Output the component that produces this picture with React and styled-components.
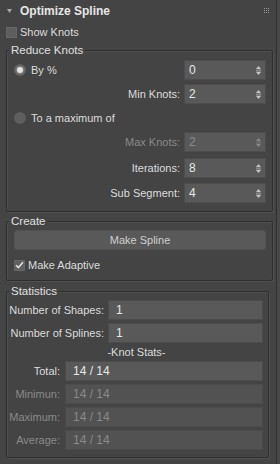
import React from "react";
import styled, { createGlobalStyle } from "styled-components";

const GlobalStyle = createGlobalStyle`
  html, body { margin: 0; padding: 0; background: #484848; }
  body { font-family: "Liberation Sans", Arial, sans-serif; font-size: 11px; color: #dcdcdc; }
  * { box-sizing: border-box; }
`;

const Panel = styled.div`
  width: 277px;
  min-height: 464px;
  background: #444444;
  border-right: 1px solid #2f2f2f;
  display: flex;
  flex-direction: column;
  white-space: nowrap;
`;

const Header = styled.div`
  height: 22px;
  display: flex;
  align-items: center;
  padding: 0 6px 0 7px;
`;

const Title = styled.span`
  margin-left: 8px;
  font-weight: bold;
  font-size: 12px;
  color: #e6e6e6;
  flex: 1;
`;

const CheckRow = styled.label`
  height: 20px;
  display: flex;
  align-items: center;
  gap: 3px;
  padding-left: ${(p) => p.$indent || 0}px;
  margin-top: ${(p) => p.$top || 0}px;
`;

const Box = styled.span`
  width: 11px;
  height: 11px;
  background: #5e5e5e;
  border: 1px solid #666;
  display: flex;
  align-items: center;
  justify-content: center;
`;

const Group = styled.div`
  position: relative;
  margin: ${(p) => p.$top}px ${(p) => p.$right}px 0 6px;
  border: 1px solid #2e2e2e;
  box-shadow: inset 1px 1px 0 #4e4e4e, 1px 1px 0 #505050;
  border-radius: 2px;
  padding: ${(p) => p.$pt}px ${(p) => p.$pr}px ${(p) => p.$pb}px 7px;
  display: flex;
  flex-direction: column;
  gap: ${(p) => p.$gap || 0}px;
`;

const GroupLabel = styled.span`
  position: absolute;
  top: -8px;
  left: 2px;
  padding: 0 2px;
  background: #444444;
  line-height: 15px;
  font-size: 11.5px;
  color: #e0e0e0;
`;

const Row = styled.div`
  height: ${(p) => p.$h}px;
  display: flex;
  align-items: flex-start;
`;

const RadioLabel = styled.div`
  height: 20px;
  flex: 1;
  display: flex;
  align-items: center;
  gap: 5px;
`;

const RadioDot = styled.span`
  width: 12px;
  height: 12px;
  border-radius: 50%;
  background: #5e5e5e;
  display: flex;
  align-items: center;
  justify-content: center;
  &::after {
    content: "";
    width: 6px;
    height: 6px;
    border-radius: 50%;
    background: ${(p) => (p.$on ? "#e2e2e2" : "transparent")};
    box-shadow: ${(p) => (p.$on ? "0 0 2px 1px rgba(220,220,220,0.35)" : "none")};
  }
`;

const FieldLabel = styled.span`
  flex: 1;
  height: 20px;
  display: flex;
  align-items: center;
  justify-content: flex-end;
  padding-right: 4px;
  color: ${(p) => (p.$disabled ? "#8a8a8a" : "#dcdcdc")};
`;

const Spinner = styled.div`
  width: 82px;
  height: 20px;
  background: #595959;
  border: 1px solid #4d4d4d;
  display: flex;
  align-items: center;
  padding: 0 4px 0 4px;
  color: ${(p) => (p.$disabled ? "#8a8a8a" : "#e8e8e8")};
  font-size: 12px;
  span { flex: 1; }
  svg { opacity: ${(p) => (p.$disabled ? 0.45 : 1)}; }
`;

const Button = styled.div`
  height: 20px;
  background: #595959;
  border: 1px solid #525252;
  border-radius: 3px;
  display: flex;
  align-items: center;
  justify-content: center;
  color: #cfcfcf;
`;

const StatRow = styled.div`
  height: 20px;
  display: grid;
  grid-template-columns: ${(p) => p.$lw}px 1fr;
  column-gap: ${(p) => p.$gap}px;
`;

const StatLabel = styled.span`
  display: flex;
  align-items: center;
  justify-content: flex-end;
  color: ${(p) => (p.$disabled ? "#8a8a8a" : "#dcdcdc")};
`;

const Field = styled.div`
  background: ${(p) => (p.$disabled ? "#525252" : "#595959")};
  border: 1px solid #4b4b4b;
  display: flex;
  align-items: center;
  padding-left: 7px;
  font-size: 12px;
  color: ${(p) => (p.$disabled ? "#8a8a8a" : "#e8e8e8")};
`;

const Caption = styled.div`
  height: 12px;
  display: flex;
  align-items: center;
  justify-content: center;
  padding-right: 4px;
`;

const Arrows = () => (
  <svg width="5" height="9" viewBox="0 0 5 9">
    <polygon points="2.5,0 5,3 0,3" fill="#c4c4c4" />
    <rect x="0" y="3.6" width="5" height="0.9" fill="#9a9a9a" />
    <rect x="0" y="4.6" width="5" height="0.9" fill="#9a9a9a" />
    <polygon points="0,6 5,6 2.5,9" fill="#c4c4c4" />
  </svg>
);

const Grip = () => (
  <svg width="6" height="6" viewBox="0 0 6 6">
    {[0, 2, 4].map((y) =>
      [0, 2, 4].map((x) => <rect key={x + "-" + y} x={x} y={y} width="1" height="1" fill="#9a9a9a" />)
    )}
  </svg>
);

const Spin = ({ value, disabled }) => (
  <Spinner $disabled={disabled}>
    <span>{value}</span>
    <Arrows />
  </Spinner>
);

export default function App() {
  return (
    <>
      <GlobalStyle />
      <Panel>
        <Header>
          <svg width="5" height="4" viewBox="0 0 5 4">
            <polygon points="0,0 5,0 2.5,4" fill="#a8a8a8" />
          </svg>
          <Title>Optimize Spline</Title>
          <Grip />
        </Header>
        <CheckRow $indent={6}>
          <Box />
          Show Knots
        </CheckRow>

        <Group $top={8} $right={3} $pt={9} $pr={6} $pb={8}>
          <GroupLabel>Reduce Knots</GroupLabel>
          <Row $h={24}>
            <RadioLabel>
              <RadioDot $on />
              By %
            </RadioLabel>
            <Spin value="0" />
          </Row>
          <Row $h={24}>
            <FieldLabel>Min Knots:</FieldLabel>
            <Spin value="2" />
          </Row>
          <Row $h={24}>
            <RadioLabel>
              <RadioDot />
              To a maximum of
            </RadioLabel>
          </Row>
          <Row $h={26}>
            <FieldLabel $disabled>Max Knots:</FieldLabel>
            <Spin value="2" disabled />
          </Row>
          <Row $h={25}>
            <FieldLabel>Iterations:</FieldLabel>
            <Spin value="8" />
          </Row>
          <Row $h={20}>
            <FieldLabel>Sub Segment:</FieldLabel>
            <Spin value="4" />
          </Row>
        </Group>

        <Group $top={9} $right={3} $pt={8} $pr={6} $pb={5}>
          <GroupLabel>Create</GroupLabel>
          <Button>Make Spline</Button>
          <CheckRow $top={5}>
            <Box>
              <svg width="9" height="8" viewBox="0 0 9 8">
                <path d="M1 4.2 L3.4 6.6 L8 1.2" stroke="#e0e0e0" strokeWidth="1.6" fill="none" />
              </svg>
            </Box>
            Make Adaptive
          </CheckRow>
        </Group>

        <Group $top={10} $right={7} $pt={8} $pr={5} $pb={7} $gap={3}>
          <GroupLabel>Statistics</GroupLabel>
          <StatRow $lw={90} $gap={4}>
            <StatLabel>Number of Shapes:</StatLabel>
            <Field>1</Field>
          </StatRow>
          <StatRow $lw={90} $gap={4}>
            <StatLabel>Number of Splines:</StatLabel>
            <Field>1</Field>
          </StatRow>
          <Caption>-Knot Stats-</Caption>
          <StatRow $lw={46} $gap={5}>
            <StatLabel>Total:</StatLabel>
            <Field>14 / 14</Field>
          </StatRow>
          <StatRow $lw={46} $gap={5}>
            <StatLabel $disabled>Minimun:</StatLabel>
            <Field $disabled>14 / 14</Field>
          </StatRow>
          <StatRow $lw={46} $gap={5}>
            <StatLabel $disabled>Maximum:</StatLabel>
            <Field $disabled>14 / 14</Field>
          </StatRow>
          <StatRow $lw={46} $gap={5}>
            <StatLabel $disabled>Average:</StatLabel>
            <Field $disabled>14 / 14</Field>
          </StatRow>
        </Group>
      </Panel>
    </>
  );
}
